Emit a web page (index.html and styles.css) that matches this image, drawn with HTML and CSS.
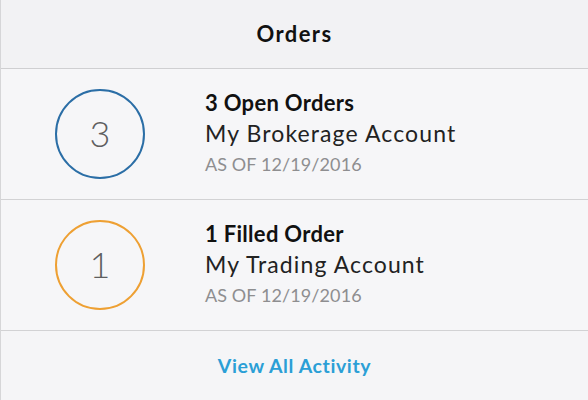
FILE: index.html
```html
<!DOCTYPE html>
<html>
<head>
<meta charset="utf-8">
<link rel="stylesheet" href="styles.css">
</head>
<body>
<div class="screen">
  <header class="header">Orders</header>
  <div class="row">
    <div class="badge badge-blue">3</div>
    <div class="info">
      <div class="title">3 Open Orders</div>
      <div class="account">My Brokerage Account</div>
      <div class="date">AS OF 12/19/2016</div>
    </div>
  </div>
  <div class="row">
    <div class="badge badge-orange">1</div>
    <div class="info">
      <div class="title">1 Filled Order</div>
      <div class="account">My Trading Account</div>
      <div class="date">AS OF 12/19/2016</div>
    </div>
  </div>
  <div class="footer"><a class="link">View All Activity</a></div>
</div>
</body>
</html>
```
FILE: styles.css
```css
* { box-sizing: border-box; }
html, body { margin: 0; padding: 0; }
body {
  width: 588px;
  height: 400px;
  overflow: hidden;
  background: #f6f6f8;
  font-family: Lato, "Open Sans", sans-serif;
}
.screen {
  border-left: 1px solid #d6d6d8;
  height: 400px;
  display: flex;
  flex-direction: column;
}
.header {
  height: 69px;
  background: #f2f2f4;
  border-bottom: 1px solid #cfcfd1;
  display: flex;
  align-items: center;
  justify-content: center;
  font-size: 22px;
  font-weight: 700;
  letter-spacing: 1.4px;
  color: #111;
  padding-bottom: 2px;
}
.row {
  height: 131px;
  border-bottom: 1px solid #d2d2d4;
  display: flex;
  align-items: center;
  padding-left: 54px;
  background: #f6f6f8;
}
.badge {
  width: 90px;
  height: 90px;
  border-radius: 50%;
  display: flex;
  align-items: center;
  justify-content: center;
  font-size: 36px;
  font-weight: 300;
  color: #5e5e60;
  margin-right: 60px;
  flex: none;
  padding-bottom: 2px;
}
.badge-blue { border: 2px solid #2b6ea6; }
.badge-orange { border: 2px solid #eea033; }
.info { display: flex; flex-direction: column; margin-top: 0; }
.title {
  font-size: 22px;
  font-weight: 700;
  letter-spacing: 0.3px;
  color: #111;
  line-height: 30px;
}
.account {
  font-size: 23px;
  font-weight: 400;
  letter-spacing: 1.1px;
  color: #222;
  line-height: 31px;
}
.date {
  font-size: 18px;
  letter-spacing: 0.1px;
  color: #8e8e90;
  line-height: 31px;
}
.footer {
  flex: 1;
  display: flex;
  align-items: center;
  justify-content: center;
  background: #f5f5f7;
}
.link {
  color: #2b9fd6;
  font-size: 19.5px;
  font-weight: 700;
  letter-spacing: 0.6px;
}
```
